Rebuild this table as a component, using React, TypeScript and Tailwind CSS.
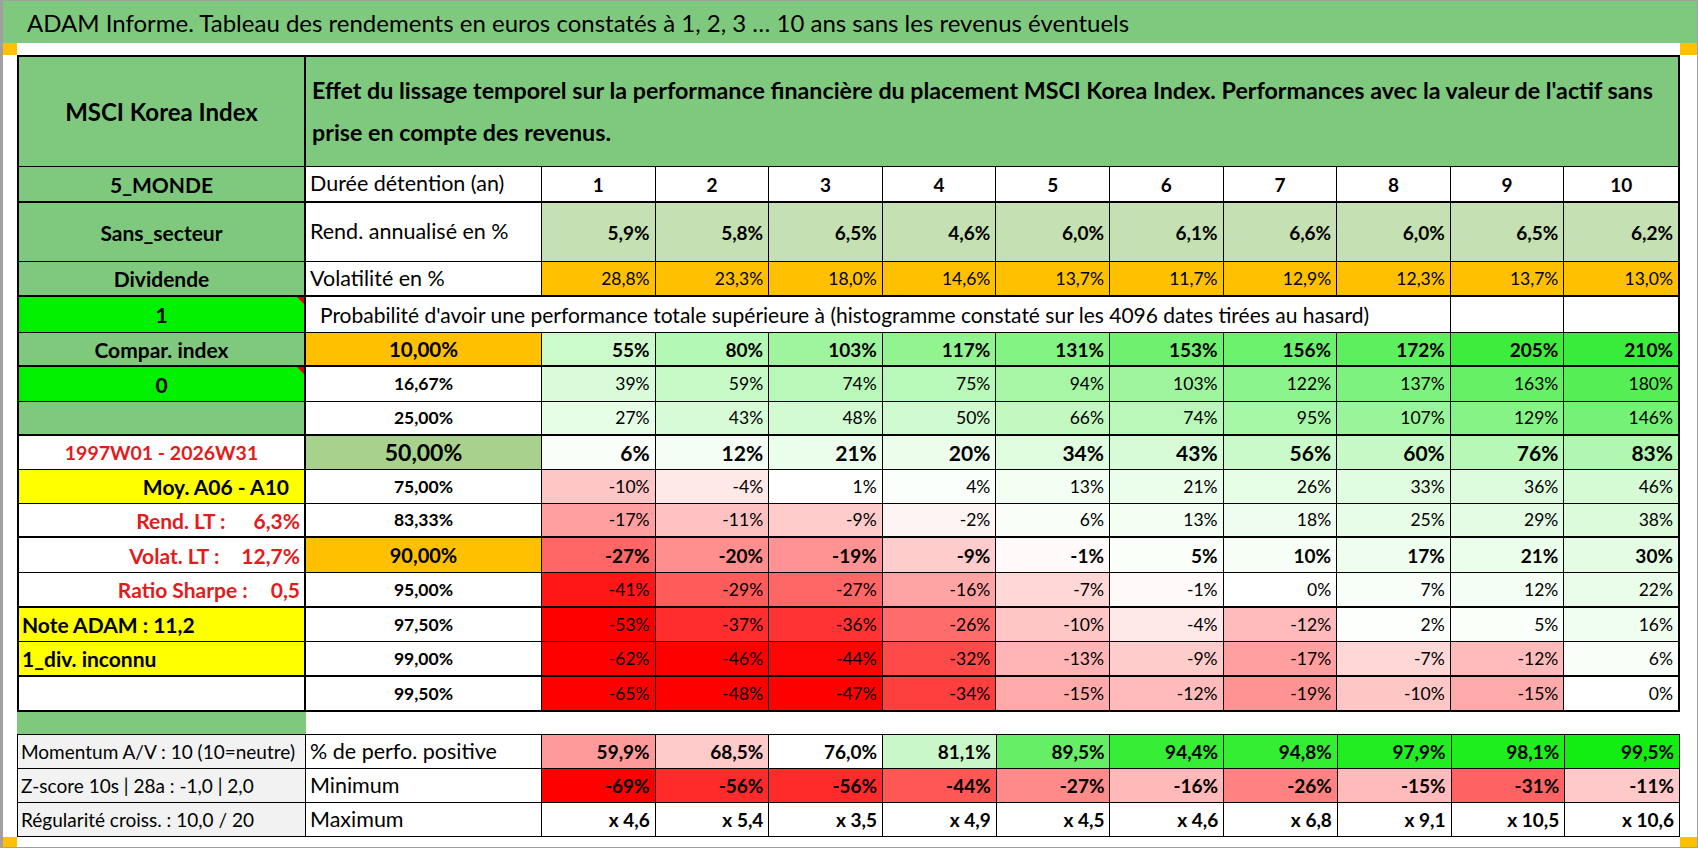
import React from "react";

const cols = "grid grid-cols-[287px_236px_repeat(10,minmax(0,1fr))] border-x-2 border-black";
const colsThin = "grid grid-cols-[288px_236px_repeat(10,minmax(0,1fr))] border-x border-black";

const cellA = "relative border-r-2 border-black flex items-center whitespace-nowrap";
const cellB = "border-r border-black flex items-center whitespace-nowrap";
const cellD = "border-r border-black last:border-r-0 flex items-center justify-end pr-[5px]";

// colour scale of the probability block: red below zero, green above
function scale(v: number): string {
  if (v >= 0) {
    const t = Math.min(1, v / 270);
    const r = Math.round(255 * (1 - t));
    const g = Math.round(255 - 25 * t);
    return `rgb(${r},${g},${r})`;
  }
  const t = Math.min(1, -v / 45);
  const gb = Math.round(255 * (1 - t));
  return `rgb(255,${gb},${gb})`;
}

const rend = ["5,9%", "5,8%", "6,5%", "4,6%", "6,0%", "6,1%", "6,6%", "6,0%", "6,5%", "6,2%"];
const vol = ["28,8%", "23,3%", "18,0%", "14,6%", "13,7%", "11,7%", "12,9%", "12,3%", "13,7%", "13,0%"];

const Tri = () => (
  <span className="absolute top-0 right-0 w-0 h-0 border-t-[7px] border-l-[7px] border-t-[#e00000] border-l-transparent" />
);

const LT = ({ label, value, gap }: { label: string; value: string; gap: string }) => (
  <>
    <span>{label}</span>
    <span className={gap}>{value}</span>
  </>
);

type ProbRow = {
  h: string;
  b: string;
  a: React.ReactNode;
  aCls: string;
  p: string;
  pCls: string;
  vals: number[];
  vCls: string;
};

const probRows: ProbRow[] = [
  {
    h: "h-[34px]", b: "border-b-2",
    a: "Compar. index", aCls: "bg-[#7fc97f] justify-center font-bold text-[21px]",
    p: "10,00%", pCls: "bg-[#ffc000] text-[20.5px]",
    vals: [55, 80, 103, 117, 131, 153, 156, 172, 205, 210], vCls: "font-bold text-[19px]",
  },
  {
    h: "h-[35px]", b: "border-b",
    a: <><span>0</span><Tri /></>, aCls: "bg-[#00f000] justify-center font-bold text-[21px]",
    p: "16,67%", pCls: "bg-white text-[17.5px]",
    vals: [39, 59, 74, 75, 94, 103, 122, 137, 163, 180], vCls: "text-[17.5px]",
  },
  {
    h: "h-[34px]", b: "border-b-2",
    a: "", aCls: "bg-[#7fc97f]",
    p: "25,00%", pCls: "bg-white text-[17.5px]",
    vals: [27, 43, 48, 50, 66, 74, 95, 107, 129, 146], vCls: "text-[17.5px]",
  },
  {
    h: "h-[34px]", b: "border-b",
    a: "1997W01 - 2026W31", aCls: "bg-white justify-center font-bold text-[19.5px] text-[#e31b1b]",
    p: "50,00%", pCls: "bg-[#a9d18e] text-[23px]",
    vals: [6, 12, 21, 20, 34, 43, 56, 60, 76, 83], vCls: "font-bold text-[21px]",
  },
  {
    h: "h-[34px]", b: "border-b",
    a: "Moy. A06 - A10", aCls: "bg-[#ffff00] justify-end pr-[15px] font-bold text-[21px]",
    p: "75,00%", pCls: "bg-white text-[17.5px]",
    vals: [-10, -4, 1, 4, 13, 21, 26, 33, 36, 46], vCls: "text-[17.5px]",
  },
  {
    h: "h-[34px]", b: "border-b-2",
    a: <LT label="Rend. LT :" value="6,3%" gap="ml-[28px]" />,
    aCls: "bg-white justify-end pr-[4px] font-bold text-[21px] text-[#e31b1b]",
    p: "83,33%", pCls: "bg-white text-[17.5px]",
    vals: [-17, -11, -9, -2, 6, 13, 18, 25, 29, 38], vCls: "text-[17.5px]",
  },
  {
    h: "h-[35px]", b: "border-b",
    a: <LT label="Volat. LT :" value="12,7%" gap="ml-[22px]" />,
    aCls: "bg-white justify-end pr-[4px] font-bold text-[21px] text-[#e31b1b]",
    p: "90,00%", pCls: "bg-[#ffc000] text-[20px]",
    vals: [-27, -20, -19, -9, -1, 5, 10, 17, 21, 30], vCls: "font-bold text-[19px]",
  },
  {
    h: "h-[35px]", b: "border-b-2",
    a: <LT label="Ratio Sharpe :" value="0,5" gap="ml-[23px]" />,
    aCls: "bg-white justify-end pr-[4px] font-bold text-[21px] text-[#e31b1b]",
    p: "95,00%", pCls: "bg-white text-[17.5px]",
    vals: [-41, -29, -27, -16, -7, -1, 0, 7, 12, 22], vCls: "text-[17.5px]",
  },
  {
    h: "h-[34px]", b: "border-b",
    a: "Note ADAM : 11,2", aCls: "bg-[#ffff00] pl-[3px] font-bold text-[21px]",
    p: "97,50%", pCls: "bg-white text-[17.5px]",
    vals: [-53, -37, -36, -26, -10, -4, -12, 2, 5, 16], vCls: "text-[17.5px]",
  },
  {
    h: "h-[35px]", b: "border-b-2",
    a: "1_div. inconnu", aCls: "bg-[#ffff00] pl-[3px] font-bold text-[21px]",
    p: "99,00%", pCls: "bg-white text-[17.5px]",
    vals: [-62, -46, -44, -32, -13, -9, -17, -7, -12, 6], vCls: "text-[17.5px]",
  },
  {
    h: "h-[35px]", b: "border-b-2",
    a: "", aCls: "bg-white",
    p: "99,50%", pCls: "bg-white text-[17.5px]",
    vals: [-65, -48, -47, -34, -15, -12, -19, -10, -15, 0], vCls: "text-[17.5px]",
  },
];

const bottomRows = [
  {
    a: "Momentum A/V : 10 (10=neutre)",
    b: "% de perfo. positive",
    vals: ["59,9%", "68,5%", "76,0%", "81,1%", "89,5%", "94,4%", "94,8%", "97,9%", "98,1%", "99,5%"],
    bgs: ["bg-[#ff9a9a]", "bg-[#ffcaca]", "bg-white", "bg-[#c9f7c9]", "bg-[#66ee66]", "bg-[#36ee36]", "bg-[#33ee33]", "bg-[#20ee20]", "bg-[#1eee1e]", "bg-[#12ee12]"],
  },
  {
    a: "Z-score 10s | 28a : -1,0 | 2,0",
    b: "Minimum",
    vals: ["-69%", "-56%", "-56%", "-44%", "-27%", "-16%", "-26%", "-15%", "-31%", "-11%"],
    bgs: ["bg-[#ff0000]", "bg-[#ff2b2b]", "bg-[#ff2b2b]", "bg-[#ff5656]", "bg-[#ff8a8a]", "bg-[#ffb9b9]", "bg-[#ff8181]", "bg-[#ffbbbb]", "bg-[#ff6262]", "bg-[#ffc9c9]"],
  },
  {
    a: "Régularité croiss. : 10,0 / 20",
    b: "Maximum",
    vals: ["x 4,6", "x 5,4", "x 3,5", "x 4,9", "x 4,5", "x 4,6", "x 6,8", "x 9,1", "x 10,5", "x 10,6"],
    bgs: Array(10).fill("bg-white"),
  },
];

function Gutter({ wide }: { wide?: boolean }) {
  return (
    <div className={`${wide ? "w-[17px]" : "w-[14px]"} flex flex-col justify-between`}>
      <div className="h-[12px] bg-[#ffc000]" />
      <div className="h-[10px] bg-[#ffc000]" />
    </div>
  );
}

export default function App() {
  return (
    <div className="w-[1698px] h-[848px] overflow-hidden bg-white border border-l-[3px] border-[#a0a0a0] flex flex-col font-['Lato',sans-serif] text-black leading-none">
      <div className="h-[42px] shrink-0 bg-[#7fc97f] flex items-center pl-[24px] pt-[1px] text-[24px] whitespace-nowrap">
        ADAM Informe. Tableau des rendements en euros constatés à 1, 2, 3 … 10 ans sans les revenus éventuels
      </div>

      <div className="flex flex-1">
        <Gutter />
        <div className="w-[1663px] flex flex-col">
          <div className="h-[12px]" />

          {/* header */}
          <div className={`${cols} h-[112px] border-t-2 border-b bg-[#7fc97f]`}>
            <div className={`${cellA} justify-center font-bold text-[24px]`}>MSCI Korea Index</div>
            <div className="col-span-11 flex flex-col justify-center pl-[6px] pb-[2px] font-bold text-[23.25px] leading-[42px] whitespace-nowrap">
              <span>
                Effet du lissage temporel sur la performance financière du placement MSCI Korea Index. Performances avec la valeur de l'actif sans
              </span>
              <span>prise en compte des revenus.</span>
            </div>
          </div>

          {/* holding period */}
          <div className={`${cols} h-[36px] border-b-2`}>
            <div className={`${cellA} bg-[#7fc97f] justify-center font-bold text-[21px]`}>5_MONDE</div>
            <div className={`${cellB} pl-[4px] text-[21.5px]`}>Durée détention (an)</div>
            {Array.from({ length: 10 }, (_, i) => (
              <div key={i} className="border-r border-black last:border-r-0 flex items-center justify-center font-bold text-[19px]">
                {i + 1}
              </div>
            ))}
          </div>

          <div className={`${cols} h-[59px] border-b`}>
            <div className={`${cellA} bg-[#7fc97f] justify-center font-bold text-[21px]`}>Sans_secteur</div>
            <div className={`${cellB} pl-[4px] text-[21.5px]`}>Rend. annualisé en %</div>
            {rend.map((v, i) => (
              <div key={i} className={`${cellD} bg-[#c5e0b3] font-bold text-[19px]`}>{v}</div>
            ))}
          </div>

          <div className={`${cols} h-[35px] border-b-2`}>
            <div className={`${cellA} bg-[#7fc97f] justify-center font-bold text-[21px]`}>Dividende</div>
            <div className={`${cellB} pl-[4px] text-[21.5px]`}>Volatilité en %</div>
            {vol.map((v, i) => (
              <div key={i} className={`${cellD} bg-[#ffc000] text-[17.5px]`}>{v}</div>
            ))}
          </div>

          <div className={`${cols} h-[36px] border-b`}>
            <div className={`${cellA} bg-[#00f000] justify-center font-bold text-[21px]`}>
              <span>1</span>
              <Tri />
            </div>
            <div className="col-span-9 border-r border-black flex items-center pl-[14px] text-[21px] whitespace-nowrap">
              Probabilité d'avoir une performance totale supérieure à (histogramme constaté sur les 4096 dates tirées au hasard)
            </div>
            <div className="border-r border-black" />
            <div />
          </div>

          {probRows.map((r, k) => (
            <div key={k} className={`${cols} ${r.h} ${r.b}`}>
              <div className={`${cellA} ${r.aCls}`}>{r.a}</div>
              <div className={`${cellB} justify-center font-bold ${r.pCls}`}>{r.p}</div>
              {r.vals.map((v, i) => (
                <div key={i} className={`${cellD} ${r.vCls}`} style={{ backgroundColor: scale(v) }}>
                  {v}%
                </div>
              ))}
            </div>
          ))}

          <div className="h-[22px] flex">
            <div className="w-[289px] bg-[#7fc97f]" />
          </div>

          {bottomRows.map((r, k) => (
            <div key={k} className={`${colsThin} ${k === 0 ? "h-[35px] border-t" : "h-[34px]"} border-b`}>
              <div className="border-r border-black bg-[#f2f2f2] flex items-center pl-[3px] text-[19px] whitespace-nowrap">{r.a}</div>
              <div className={`${cellB} pl-[4px] text-[21.5px]`}>{r.b}</div>
              {r.vals.map((v, i) => (
                <div key={i} className={`${cellD} font-bold text-[19px] ${r.bgs[i]}`}>{v}</div>
              ))}
            </div>
          ))}

          <div className="flex-1" />
        </div>
        <Gutter wide />
      </div>
    </div>
  );
}
